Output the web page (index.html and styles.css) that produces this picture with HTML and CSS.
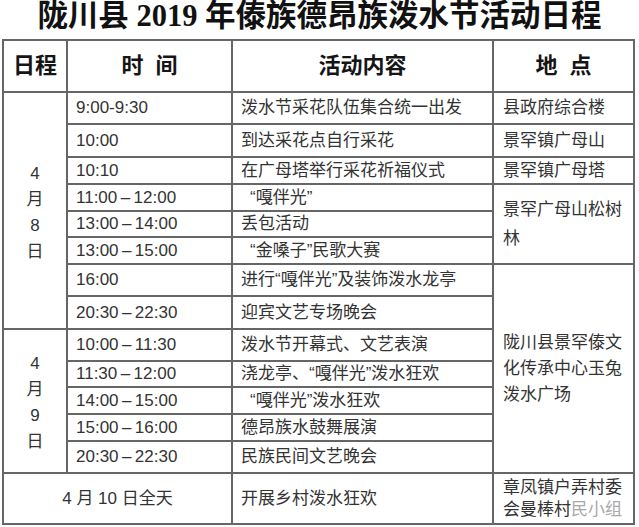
FILE: index.html
```html
<!DOCTYPE html>
<html lang="zh-CN">
<head>
<meta charset="utf-8">
<title>陇川县 2019 年傣族德昂族泼水节活动日程</title>
<link rel="stylesheet" href="styles.css">
</head>
<body>
<h1 class="title">陇川县 2019 年傣族德昂族泼水节活动日程</h1>
<table class="schedule">
  <colgroup>
    <col class="c-date">
    <col class="c-time">
    <col class="c-act">
    <col class="c-loc">
  </colgroup>
  <thead>
    <tr class="h52">
      <th>日程</th>
      <th>时&nbsp;&nbsp;间</th>
      <th>活动内容</th>
      <th>地&nbsp;&nbsp;点</th>
    </tr>
  </thead>
  <tbody>
    <tr class="h32">
      <td class="date" rowspan="8">4<br>月<br>8<br>日</td>
      <td>9:00-9:30</td>
      <td>泼水节采花队伍集合统一出发</td>
      <td class="loc">县政府综合楼</td>
    </tr>
    <tr class="h33">
      <td>10:00</td>
      <td>到达采花点自行采花</td>
      <td class="loc">景罕镇广母山</td>
    </tr>
    <tr class="h27">
      <td>10:10</td>
      <td>在广母塔举行采花祈福仪式</td>
      <td class="loc">景罕镇广母塔</td>
    </tr>
    <tr class="h27">
      <td>11:00&thinsp;–&thinsp;12:00</td>
      <td><span class="indent">“嘎伴光”</span></td>
      <td class="loc loc-tall" rowspan="3">景罕广母山松树林</td>
    </tr>
    <tr class="h26">
      <td>13:00&thinsp;–&thinsp;14:00</td>
      <td>丢包活动</td>
    </tr>
    <tr class="h27">
      <td>13:00&thinsp;–&thinsp;15:00</td>
      <td><span class="indent">“金嗓子”</span>民歌大赛</td>
    </tr>
    <tr class="h32">
      <td>16:00</td>
      <td>进行“嘎伴光”及装饰泼水龙亭</td>
      <td class="loc loc-big" rowspan="7">陇川县景罕傣文化传承中心玉兔泼水广场</td>
    </tr>
    <tr class="h33">
      <td>20:30&thinsp;–&thinsp;22:30</td>
      <td>迎宾文艺专场晚会</td>
    </tr>
    <tr class="h32">
      <td class="date" rowspan="5">4<br>月<br>9<br>日</td>
      <td>10:00&thinsp;–&thinsp;11:30</td>
      <td>泼水节开幕式、文艺表演</td>
    </tr>
    <tr class="h26">
      <td>11:30&thinsp;–&thinsp;12:00</td>
      <td>浇龙亭、“嘎伴光”泼水狂欢</td>
    </tr>
    <tr class="h27">
      <td>14:00&thinsp;–&thinsp;15:00</td>
      <td><span class="indent">“嘎伴光”</span>泼水狂欢</td>
    </tr>
    <tr class="h27">
      <td>15:00&thinsp;–&thinsp;16:00</td>
      <td>德昂族水鼓舞展演</td>
    </tr>
    <tr class="h32">
      <td>20:30&thinsp;–&thinsp;22:30</td>
      <td>民族民间文艺晚会</td>
    </tr>
    <tr class="h51">
      <td class="allday" colspan="2">4 月 10 日全天</td>
      <td>开展乡村泼水狂欢</td>
      <td class="loc loc-last">章凤镇户弄村委会曼棒村<span class="wm">民小组</span></td>
    </tr>
  </tbody>
</table>
</body>
</html>
```

FILE: styles.css
```css
html, body {
  margin: 0;
  padding: 0;
  background: #ffffff;
}

body {
  font-family: "Liberation Sans", "Noto Sans CJK SC", sans-serif;
  color: #333333;
}

.title {
  margin: 0;
  padding-top: 1px;
  height: 38px;
  font-family: "Liberation Serif", "Noto Sans CJK SC", serif;
  font-weight: 700;
  font-size: 30.5px;
  line-height: 30px;
  text-align: center;
  color: #111111;
  white-space: nowrap;
}

.schedule {
  margin-left: 2px;
  border-collapse: separate;
  border-spacing: 0;
  table-layout: fixed;
  width: 633px;
  border-top: 2px solid #666666;
  border-left: 2px solid #666666;
  font-size: 17px;
}

.c-date { width: 64px; }
.c-time { width: 165px; }
.c-act { width: 261px; }
.c-loc { width: 141px; }

.schedule th,
.schedule td {
  border-right: 2px solid #666666;
  border-bottom: 2px solid #666666;
  padding: 0 0 0 8px;
  text-align: left;
  vertical-align: middle;
  line-height: 20px;
  white-space: nowrap;
  box-sizing: border-box;
}

.schedule th {
  padding: 0;
  text-align: center;
  font-size: 22px;
  font-weight: 700;
  color: #151515;
}

.h52 { height: 52px; }
.h51 { height: 51px; }
.h33 { height: 33px; }
.h32 { height: 32px; }
.h27 { height: 27px; }
.h26 { height: 26px; }

.schedule td.date {
  padding: 4px 0 0 0;
  text-align: center;
  line-height: 26px;
}

.schedule td.allday {
  padding: 0;
  text-align: center;
}

.indent {
  padding-left: 9px;
}

.schedule td.loc {
  white-space: normal;
  padding-left: 9px;
}

.schedule td.loc-tall { line-height: 29px; }
.schedule td.loc-big { line-height: 26px; }
.schedule td.loc-last { line-height: 22px; }

.wm {
  color: #a8a8a8;
}
```
